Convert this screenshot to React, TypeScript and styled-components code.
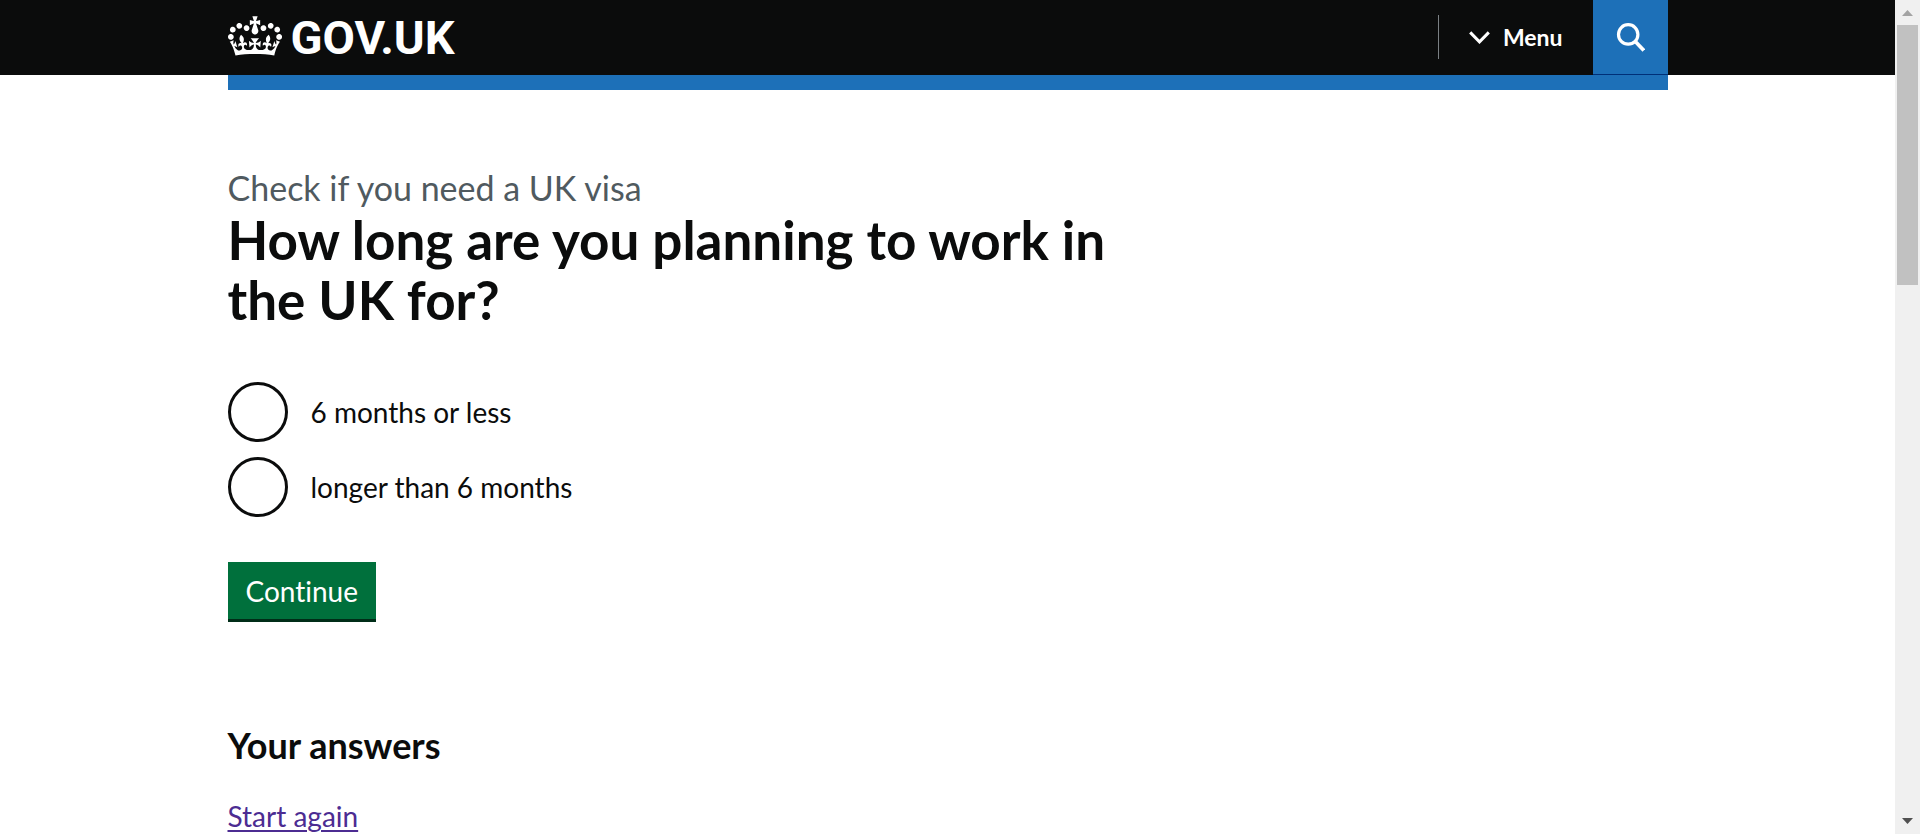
import React, { useState } from 'react';
import styled, { createGlobalStyle, css } from 'styled-components';

const color = {
  black: '#0b0c0c',
  blue: '#1d70b8',
  darkBlue: '#003078',
  grey: '#505a5f',
  green: '#00703c',
  darkGreen: '#002d18',
  visited: '#4c2c92',
  white: '#ffffff',
};

const GlobalStyle = createGlobalStyle`
  *, *::before, *::after { box-sizing: border-box; }
  html { scrollbar-width: none; }
  body {
    margin: 0;
    background: ${color.white};
    color: ${color.black};
    font-family: Lato, "Liberation Sans", sans-serif;
    font-size: 28px;
    font-variant-ligatures: none;
    line-height: 36px;
  }
`;

const Shell = styled.div`
  display: grid;
  grid-template-columns: minmax(0, 1fr) 25px;
  min-height: 100vh;
`;

const Container = styled.div`
  max-width: 1440px;
  margin: 0 auto;
`;

const Page = styled.div`
  min-width: 0;
`;

const Header = styled.header`
  background: ${color.black};
`;

const HeaderRow = styled(Container)`
  display: flex;
  align-items: center;
  justify-content: space-between;
  height: 75px;
`;

const HeaderBar = styled(Container)`
  height: 15px;
  background: ${color.blue};
`;

const LogoLink = styled.a`
  display: flex;
  align-items: center;
  gap: 9px;
  color: ${color.white};
  font-family: Roboto, "Liberation Sans", sans-serif;
  font-size: 47px;
  font-weight: 700;
  line-height: 60px;
  text-decoration: none;
`;

const Crown = styled.svg`
  width: 54px;
  height: 40px;
  margin-bottom: 4px;
  fill: currentColor;
`;

const HeaderNav = styled.nav`
  display: flex;
  align-items: center;
  height: 100%;
`;

const headerButton = css`
  display: flex;
  align-items: center;
  border: 0;
  color: ${color.white};
  font: inherit;
  cursor: pointer;
`;

const MenuButton = styled.button`
  ${headerButton}
  gap: 13px;
  height: 44px;
  margin-bottom: 1px;
  padding: 0 30px;
  border-left: 1px solid #7b8084;
  background: transparent;
  font-size: 23px;
  font-weight: 700;
`;

const SearchButton = styled.button`
  ${headerButton}
  justify-content: center;
  width: 75px;
  height: 100%;
  padding: 0;
  border-bottom: 1px solid ${color.darkBlue};
  background: ${color.blue};
`;

const LineIcon = styled.svg`
  display: block;
  fill: none;
  stroke: currentColor;
`;

const Main = styled(Container)`
  display: grid;
  grid-template-columns: 2fr 1fr;
  column-gap: 45px;
  padding-top: 75px;
`;

const Caption = styled.span`
  display: block;
  color: ${color.grey};
  font-size: 34px;
  font-weight: 400;
  line-height: 45px;
`;

const Title = styled.h1`
  margin: 0 0 52px;
  font-size: 53px;
  font-weight: 700;
  line-height: 60px;
`;

const Radios = styled.fieldset`
  display: flex;
  flex-direction: column;
  gap: 15px;
  margin: 0 0 45px;
  padding: 0;
  border: 0;
`;

const RadioItem = styled.div`
  display: flex;
  align-items: center;
`;

const RadioInput = styled.input`
  appearance: none;
  flex: none;
  width: 60px;
  height: 60px;
  margin: 0;
  border: 3px solid ${color.black};
  border-radius: 50%;
  background: ${color.white};
  cursor: pointer;

  &:checked {
    background: radial-gradient(circle, ${color.black} 15px, ${color.white} 16px);
  }
`;

const RadioLabel = styled.label`
  padding: 0 23px;
  cursor: pointer;
`;

const SubmitButton = styled.button`
  height: 57px;
  margin-bottom: 104px;
  padding: 0 18px;
  border: 0;
  background: ${color.green};
  box-shadow: 0 3px 0 ${color.darkGreen};
  color: ${color.white};
  font: inherit;
  font-variant-ligatures: none;
  cursor: pointer;
`;

const AnswersHeading = styled.h2`
  margin: 0 0 30px;
  font-size: 36px;
  font-weight: 700;
  line-height: 45px;
`;

const Paragraph = styled.p`
  margin: 0;
`;

const VisitedLink = styled.a`
  color: ${color.visited};
  text-decoration: underline;
  text-decoration-thickness: 2px;
  text-underline-offset: 3px;
`;

const ScrollTrack = styled.div`
  position: sticky;
  top: 0;
  display: flex;
  flex-direction: column;
  height: 100vh;
  padding: 0 2px;
  background: #f0f0f0;
`;

const ScrollThumb = styled.div`
  flex: 0 0 260px;
  margin-bottom: auto;
  background: #c1c1c1;
`;

const ScrollArrow = styled.svg<{ $tone: string }>`
  flex: none;
  width: 21px;
  height: 25px;
  fill: ${(p) => p.$tone};
`;

const durations = [
  { id: 'six-months-or-less', label: '6 months or less' },
  { id: 'longer-than-six-months', label: 'longer than 6 months' },
];

function CrownIcon() {
  return (
    <Crown viewBox="0 0 132 97" aria-hidden="true">
      <path d="M25 30.2c3.5 1.5 7.7-.2 9.1-3.7 1.5-3.6-.2-7.8-3.9-9.2-3.6-1.4-7.6.3-9.1 3.9-1.4 3.5.3 7.5 3.9 9zM9 39.5c3.6 1.5 7.8-.2 9.2-3.7 1.5-3.6-.2-7.8-3.9-9.1-3.6-1.5-7.6.2-9.1 3.8-1.4 3.5.3 7.5 3.8 9zM4.4 57.2c3.5 1.5 7.7-.2 9.1-3.8 1.5-3.6-.2-7.7-3.9-9.1-3.5-1.5-7.6.3-9.1 3.8-1.4 3.5.3 7.6 3.9 9.1zm38.3-21.4c3.5 1.5 7.7-.2 9.1-3.8 1.5-3.6-.2-7.7-3.9-9.1-3.6-1.5-7.6.3-9.1 3.8-1.3 3.6.4 7.7 3.9 9.1zm64.4-5.6c-3.6 1.5-7.8-.2-9.1-3.7-1.5-3.6.2-7.8 3.8-9.2 3.6-1.4 7.7.3 9.2 3.9 1.3 3.5-.4 7.5-3.9 9zm15.9 9.3c-3.6 1.5-7.7-.2-9.1-3.7-1.5-3.6.2-7.8 3.7-9.1 3.6-1.5 7.7.2 9.2 3.8 1.5 3.5-.3 7.5-3.8 9zm4.7 17.7c-3.6 1.5-7.8-.2-9.2-3.8-1.5-3.6.2-7.7 3.9-9.1 3.6-1.5 7.7.3 9.2 3.8 1.3 3.5-.4 7.6-3.9 9.1zM89.3 35.8c-3.6 1.5-7.8-.2-9.2-3.8-1.4-3.6.2-7.7 3.9-9.1 3.6-1.5 7.7.3 9.2 3.8 1.4 3.6-.3 7.7-3.9 9.1zM69.7 17.7l8.9 4.7V9.3l-8.9 2.8c-.2-.3-.5-.6-.9-.9L72.4 0H59.6l3.5 11.2c-.3.3-.6.5-.9.9l-8.8-2.8v13.1l8.8-4.7c.3.3.6.7.9.9l-5 15.4v.1c-.2.8-.4 1.6-.4 2.4 0 4.1 3.1 7.5 7 8.1h.2c.3 0 .7.1 1 .1.4 0 .7 0 1-.1h.2c4-.6 7.1-4.1 7.1-8.1 0-.8-.1-1.7-.4-2.4V34l-5.1-15.4c.4-.2.7-.6 1-.9zM66 92.8c16.9 0 32.8 1.1 47.1 3.2 4-16.9 8.9-26.7 14-33.5l-9.6-3.4c1 4.9 1.1 7.2 0 10.2-1.5-1.4-3-4.3-4.2-8.7L108.6 76c2.8-2 5-3.2 7.5-3.3-4.4 9.4-10 11.9-13.6 11.2-4.3-.8-6.3-4.6-5.6-7.9 1-4.7 5.7-5.9 8-.5 4.3-8.7-3-11.4-7.6-8.8 7.1-7.2 7.9-13.5 2.1-21.1-8 6.1-8.1 12.3-4.5 20.8-4.7-5.4-12.1-2.5-9.5 6.2 3.4-5.2 7.9-2 7.2 3.1-.6 4.3-6.4 7.8-13.5 7.2-10.3-.9-10.9-8-11.2-13.8 2.5-.5 7.1 1.8 11 7.3L80.2 60c-4.1 4.4-8 5.3-12.3 5.4 1.4-4.4 8-11.6 8-11.6H55.5s6.4 7.2 7.9 11.6c-4.2-.1-8-1-12.3-5.4l1.4 16.4c3.9-5.5 8.5-7.7 10.9-7.3-.3 5.8-.9 12.8-11.1 13.8-7.2.6-12.9-2.9-13.5-7.2-.7-5 3.8-8.3 7.1-3.1 2.7-8.7-4.6-11.6-9.4-6.2 3.7-8.5 3.6-14.7-4.6-20.8-5.8 7.6-5 13.9 2.2 21.1-4.7-2.6-11.9.1-7.7 8.8 2.3-5.5 7.1-4.2 8.1.5.7 3.3-1.3 7.1-5.7 7.9-3.5.7-9-1.8-13.5-11.2 2.5.1 4.7 1.3 7.5 3.3l-4.7-15.4c-1.2 4.4-2.7 7.2-4.3 8.7-1.1-3-.9-5.3 0-10.2l-9.5 3.4c5 6.9 9.9 16.7 14 33.5 14.8-2.1 30.8-3.2 47.7-3.2z" />
    </Crown>
  );
}

export default function App() {
  const [duration, setDuration] = useState('');

  return (
    <>
      <GlobalStyle />
      <Shell>
        <Page>
          <Header>
            <HeaderRow>
              <LogoLink href="#">
                <CrownIcon />
                GOV.UK
              </LogoLink>
              <HeaderNav>
                <MenuButton type="button">
                  <LineIcon width="21" height="13" viewBox="0 0 21 13" strokeWidth="3" aria-hidden="true">
                    <path d="M1.2 1.4 10.5 10.9 19.8 1.4" />
                  </LineIcon>
                  Menu
                </MenuButton>
                <SearchButton type="button" aria-label="Search">
                  <LineIcon width="30" height="29" viewBox="0 0 30 29" strokeWidth="3.2" aria-hidden="true">
                    <circle cx="13.2" cy="11.4" r="9.7" />
                    <path d="M19.6 17.8 28.8 27.4" strokeWidth="3.6" />
                  </LineIcon>
                </SearchButton>
              </HeaderNav>
            </HeaderRow>
          </Header>
          <HeaderBar />
          <Main as="main">
            <div>
              <form onSubmit={(e) => e.preventDefault()}>
                <Title id="question">
                  <Caption>Check if you need a UK visa</Caption>
                  How long are you planning to work in the UK for?
                </Title>
                <Radios aria-labelledby="question">
                  {durations.map(({ id, label }) => (
                    <RadioItem key={id}>
                      <RadioInput
                        type="radio"
                        name="duration"
                        id={id}
                        value={id}
                        checked={duration === id}
                        onChange={() => setDuration(id)}
                      />
                      <RadioLabel htmlFor={id}>{label}</RadioLabel>
                    </RadioItem>
                  ))}
                </Radios>
                <SubmitButton type="submit">Continue</SubmitButton>
              </form>
              <AnswersHeading>Your answers</AnswersHeading>
              <Paragraph>
                <VisitedLink href="#">Start again</VisitedLink>
              </Paragraph>
            </div>
          </Main>
        </Page>
        <ScrollTrack aria-hidden="true">
          <ScrollArrow viewBox="0 0 21 25" $tone="#a3a3a3">
            <path d="M5 16 10.5 10 16 16z" />
          </ScrollArrow>
          <ScrollThumb />
          <ScrollArrow viewBox="0 0 21 25" $tone="#505050">
            <path d="M5 9 10.5 15 16 9z" />
          </ScrollArrow>
        </ScrollTrack>
      </Shell>
    </>
  );
}
